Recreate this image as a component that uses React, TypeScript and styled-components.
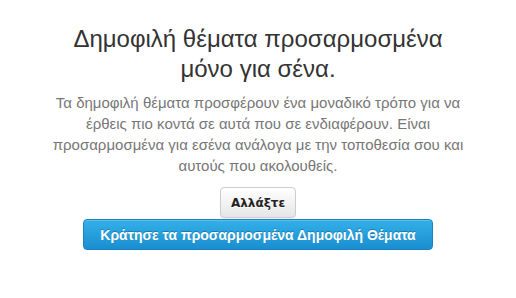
import styled, { createGlobalStyle } from 'styled-components';

const GlobalStyle = createGlobalStyle`
  html, body {
    margin: 0;
    padding: 0;
    background: #ffffff;
  }
  body {
    font-family: "Liberation Sans", Arial, sans-serif;
  }
`;

const S = {
  Page: styled.div`
    width: 516px;
    height: 298px;
    display: flex;
    justify-content: center;
    padding-top: 24px;
    box-sizing: border-box;
  `,
  Content: styled.div`
    width: 414px;
    display: flex;
    flex-direction: column;
    align-items: center;
    text-align: center;
  `,
  Title: styled.h2`
    margin: 0 0 8px;
    font-size: 24px;
    line-height: 30px;
    font-weight: 400;
    color: #333333;
  `,
  Description: styled.p`
    width: 100%;
    margin: 0 0 11px;
    font-size: 15px;
    line-height: 21px;
    color: #777777;
  `,
  Actions: styled.div`
    display: flex;
    flex-direction: column;
    align-items: center;
    gap: 1px;
  `,
  Button: styled.button<{ $primary?: boolean }>`
    font-family: ${({ $primary }) =>
      $primary ? '"Liberation Sans", Arial, sans-serif' : '"DejaVu Sans", Verdana, sans-serif'};
    font-weight: 700;
    font-size: ${({ $primary }) => ($primary ? '14px' : '12px')};
    height: 31px;
    padding: ${({ $primary }) => ($primary ? '0 16px' : '0 10px')};
    border-radius: 4px;
    cursor: pointer;
    color: ${({ $primary }) => ($primary ? '#ffffff' : '#222222')};
    border: 1px solid ${({ $primary }) => ($primary ? '#1c82c3' : '#cccccc')};
    background: ${({ $primary }) =>
      $primary
        ? 'linear-gradient(to bottom, #33b0e8, #1a8ed0)'
        : 'linear-gradient(to bottom, #ffffff, #e6e6e6)'};
    text-shadow: ${({ $primary }) =>
      $primary ? '0 -1px 0 rgba(0, 0, 0, 0.25)' : '0 1px 0 rgba(255, 255, 255, 0.8)'};
    box-shadow: ${({ $primary }) =>
      $primary ? 'inset 0 1px 0 rgba(255, 255, 255, 0.2)' : '0 1px 1px rgba(0, 0, 0, 0.05)'};
  `,
};

const App = () => {
  return (
    <>
      <GlobalStyle />
      <S.Page>
        <S.Content>
          <S.Title>Δημοφιλή θέματα προσαρμοσμένα μόνο για σένα.</S.Title>
          <S.Description>
            Τα δημοφιλή θέματα προσφέρουν ένα μοναδικό τρόπο για να έρθεις πιο κοντά σε αυτά
            που σε ενδιαφέρουν. Είναι προσαρμοσμένα για εσένα ανάλογα με την τοποθεσία σου και
            αυτούς που ακολουθείς.
          </S.Description>
          <S.Actions>
            <S.Button>Αλλάξτε</S.Button>
            <S.Button $primary>Κράτησε τα προσαρμοσμένα Δημοφιλή Θέματα</S.Button>
          </S.Actions>
        </S.Content>
      </S.Page>
    </>
  );
};

export default App;
